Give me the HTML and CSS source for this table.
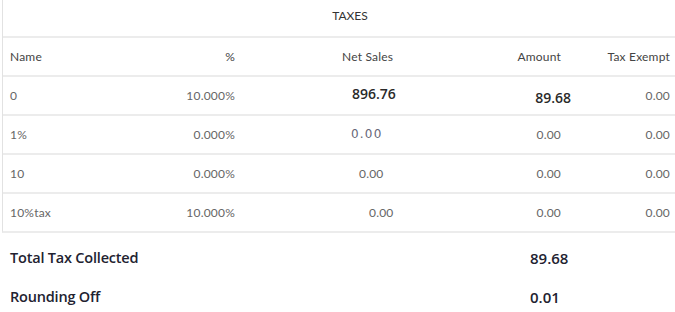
FILE: index.html
```html
<!DOCTYPE html>
<html>
<head>
<meta charset="utf-8">
<link rel="stylesheet" href="styles.css">
</head>
<body>
<div class="taxes">
  <div class="title">TAXES</div>
  <div class="row head">
    <div class="c name">Name</div>
    <div class="c pct">%</div>
    <div class="c net net-h">Net Sales</div>
    <div class="c amt">Amount</div>
    <div class="c exm">Tax Exempt</div>
  </div>
  <div class="row">
    <div class="c name">0</div>
    <div class="c pct">10.000%</div>
    <div class="c net net-0 big">896.76</div>
    <div class="c amt big big-amt">89.68</div>
    <div class="c exm">0.00</div>
  </div>
  <div class="row">
    <div class="c name">1%</div>
    <div class="c pct">0.000%</div>
    <div class="c net net-1 odd">0.00</div>
    <div class="c amt">0.00</div>
    <div class="c exm">0.00</div>
  </div>
  <div class="row">
    <div class="c name">10</div>
    <div class="c pct">0.000%</div>
    <div class="c net net-2">0.00</div>
    <div class="c amt">0.00</div>
    <div class="c exm">0.00</div>
  </div>
  <div class="row">
    <div class="c name">10%tax</div>
    <div class="c pct">10.000%</div>
    <div class="c net net-3">0.00</div>
    <div class="c amt">0.00</div>
    <div class="c exm">0.00</div>
  </div>
</div>
<div class="summary">
  <div class="sum-row"><span class="label">Total Tax Collected</span><span class="value">89.68</span></div>
  <div class="sum-row"><span class="label">Rounding Off</span><span class="value">0.01</span></div>
</div>
</body>
</html>
```

FILE: styles.css
```css
html, body {
  margin: 0;
  padding: 0;
  background: #fff;
  overflow: hidden;
}
body {
  width: 675px;
  height: 312px;
  font-family: Lato, "Open Sans", sans-serif;
}
.taxes {
  margin-left: 2px;
  width: 680px;
  border-left: 1px solid #e2e2e2;
  border-bottom: 2px solid #ececec;
}
.title {
  height: 38px;
  border-bottom: 2px solid #ececec;
  display: flex;
  align-items: center;
  justify-content: center;
  font-size: 12px;
  color: #333;
  padding-left: 14px;
  padding-bottom: 5px;
  box-sizing: border-box;
}
.row {
  display: grid;
  grid-template-columns: 118px 120px 178px 142px 122px;
  height: 39px;
  box-sizing: border-box;
  border-bottom: 2px solid #ececec;
  align-items: center;
  font-size: 12px;
  letter-spacing: 0.2px;
  color: #666;
}
.row:last-child {
  border-bottom: none;
  height: 37px;
}
.row.head {
  color: #444;
  height: 39px;
}
.c {
  white-space: nowrap;
}
.name {
  padding-left: 7px;
}
.pct {
  text-align: right;
  padding-right: 6px;
}
.net {
  text-align: left;
}
.net-h { padding-left: 101px; }
.net-0 { padding-left: 111px; }
.net-1 { padding-left: 110px; }
.net-2 { padding-left: 118px; }
.net-3 { padding-left: 128px; }
.amt {
  text-align: right;
}
.exm {
  text-align: right;
  padding-right: 13px;
}
.big {
  font-family: "Open Sans", sans-serif;
  font-weight: 600;
  font-size: 14px;
  letter-spacing: 0;
  color: #2a2a2a;
}
.big-amt {
  position: relative;
  left: 10px;
  top: 2px;
}
.net-0 {
  position: relative;
  top: -2px;
}
.odd {
  font-family: "DejaVu Sans", sans-serif;
  font-size: 12px;
  letter-spacing: 1.2px;
  color: #667;
  position: relative;
  top: -1px;
}
.summary {
  padding-top: 5px;
}
.sum-row {
  display: flex;
  height: 39px;
  align-items: center;
  font-family: "Open Sans", sans-serif;
  font-weight: 600;
  font-size: 14.5px;
  letter-spacing: -0.2px;
  color: #222230;
}
.label {
  width: 530px;
  padding-left: 10px;
  box-sizing: border-box;
}
.value {
  font-size: 15px;
  letter-spacing: 0;
}
```
